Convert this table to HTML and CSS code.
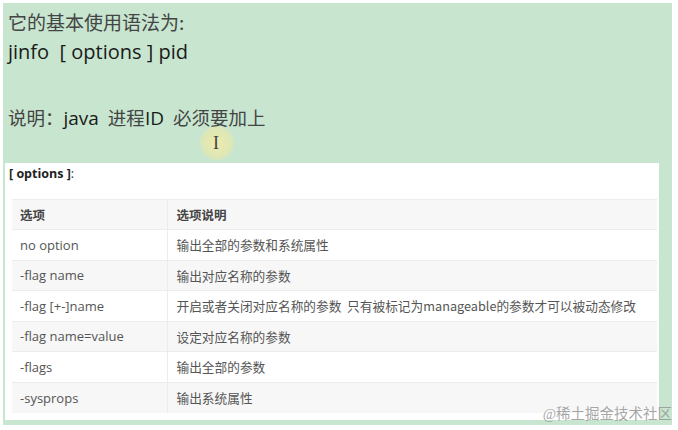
FILE: index.html
```html
<!DOCTYPE html>
<html lang="zh">
<head>
<meta charset="utf-8">
<link rel="stylesheet" href="styles.css">
</head>
<body>
<div class="slide">
  <p class="line cn">它的基本使用语法为:</p>
  <p class="line cmd">jinfo&nbsp; [ options ] pid</p>
  <p class="line note"><span class="cn">说明：</span>java <span class="cn">进程</span>ID <span class="cn">必须要加上</span></p>
  <div class="cursor"><span class="halo"></span><span class="ibeam">I</span></div>
  <div class="panel">
    <div class="panel-title"><b>[ options ]</b>:</div>
    <table class="opts">
      <thead><tr><th class="c1">选项</th><th>选项说明</th></tr></thead>
      <tbody>
        <tr><td class="c1">no option</td><td>输出全部的参数和系统属性</td></tr>
        <tr><td class="c1">-flag name</td><td>输出对应名称的参数</td></tr>
        <tr><td class="c1">-flag [+-]name</td><td>开启或者关闭对应名称的参数&nbsp; 只有被标记为manageable的参数才可以被动态修改</td></tr>
        <tr><td class="c1">-flag name=value</td><td>设定对应名称的参数</td></tr>
        <tr><td class="c1">-flags</td><td>输出全部的参数</td></tr>
        <tr><td class="c1">-sysprops</td><td>输出系统属性</td></tr>
      </tbody>
    </table>
  </div>
  <div class="watermark">@稀土掘金技术社区</div>
</div>
</body>
</html>
```

FILE: styles.css
```css
html, body {
  margin: 0;
  padding: 0;
  background: #ffffff;
}
body {
  width: 678px;
  height: 430px;
  overflow: hidden;
}
.slide {
  position: relative;
  margin: 3px 0 0 3px;
  width: 669px;
  height: 422px;
  background: #c7e5cf;
  box-sizing: border-box;
  padding: 5px 0 0 5px;
}
.line {
  margin: 0;
  color: #2a2a2a;
  white-space: nowrap;
}
.cn {
  font-family: "Noto Sans CJK SC", sans-serif;
  color: #444;
}
.slide > .line.cn {
  font-size: 19px;
  line-height: 28px;
  height: 28px;
}
.cmd {
  font-family: "Open Sans", "Noto Sans", sans-serif;
  font-size: 20px;
  line-height: 28px;
  height: 28px;
  margin-top: 2px;
  color: #1a1a1a;
}
.note {
  font-family: "Open Sans", "Noto Sans", sans-serif;
  font-size: 19px;
  line-height: 28px;
  height: 28px;
  margin-top: 37px;
  color: #1a1a1a;
  word-spacing: 4px;
}
.note .cn {
  font-size: 18.5px;
}
.cursor {
  position: absolute;
  left: 197px;
  top: 123px;
  width: 34px;
  height: 34px;
}
.halo {
  position: absolute;
  inset: 0;
  border-radius: 50%;
  background: radial-gradient(circle, rgba(240,236,170,0.95) 0%, rgba(232,232,170,0.7) 55%, rgba(220,230,180,0) 100%);
}
.ibeam {
  position: absolute;
  left: 13px;
  top: 7px;
  font-family: "Liberation Serif", serif;
  font-size: 18px;
  line-height: 20px;
  color: #444;
}
.panel {
  margin: 32px 0 0 -3px;
  width: 654px;
  height: 257px;
  background: #ffffff;
  box-sizing: border-box;
  padding: 2px 2px 0 7px;
}
.panel-title {
  font-family: "Open Sans", "Noto Sans", sans-serif;
  font-size: 12.5px;
  line-height: 18px;
  color: #333;
  margin-left: -3px;
}
.panel-title b {
  font-weight: 700;
  color: #222;
}
.opts {
  margin-top: 16px;
  width: 645px;
  border-collapse: collapse;
  font-family: "Open Sans", "Noto Sans CJK SC", sans-serif;
  font-size: 13px;
  color: #555;
}
.opts th, .opts td {
  height: 30.5px;
  padding: 0 0 0 8px;
  text-align: left;
  border-top: 1px solid #ececec;
  border-left: 1px solid #ececec;
  white-space: nowrap;
  box-sizing: border-box;
}
.opts th {
  height: 30px;
  font-weight: 700;
  color: #444;
  font-family: "Noto Sans CJK SC", sans-serif;
  font-size: 12.5px;
}
.opts th:not(.c1), .opts td:not(.c1) {
  padding-left: 9px;
}
.opts .c1 {
  width: 155px;
  border-left: none;
}
.opts td:not(.c1) {
  font-family: "Noto Sans CJK SC", "Open Sans", sans-serif;
  font-size: 12.7px;
}
.opts thead tr {
  background: #f7f7f7;
}
.opts tbody tr:nth-child(odd) {
  background: #ffffff;
}
.opts tbody tr:nth-child(even) {
  background: #f7f7f7;
}
.watermark {
  position: absolute;
  right: 0;
  bottom: 2px;
  font-family: "Liberation Serif", "Noto Sans CJK SC", serif;
  font-size: 14.5px;
  color: rgba(150,150,150,0.85);
}
```
